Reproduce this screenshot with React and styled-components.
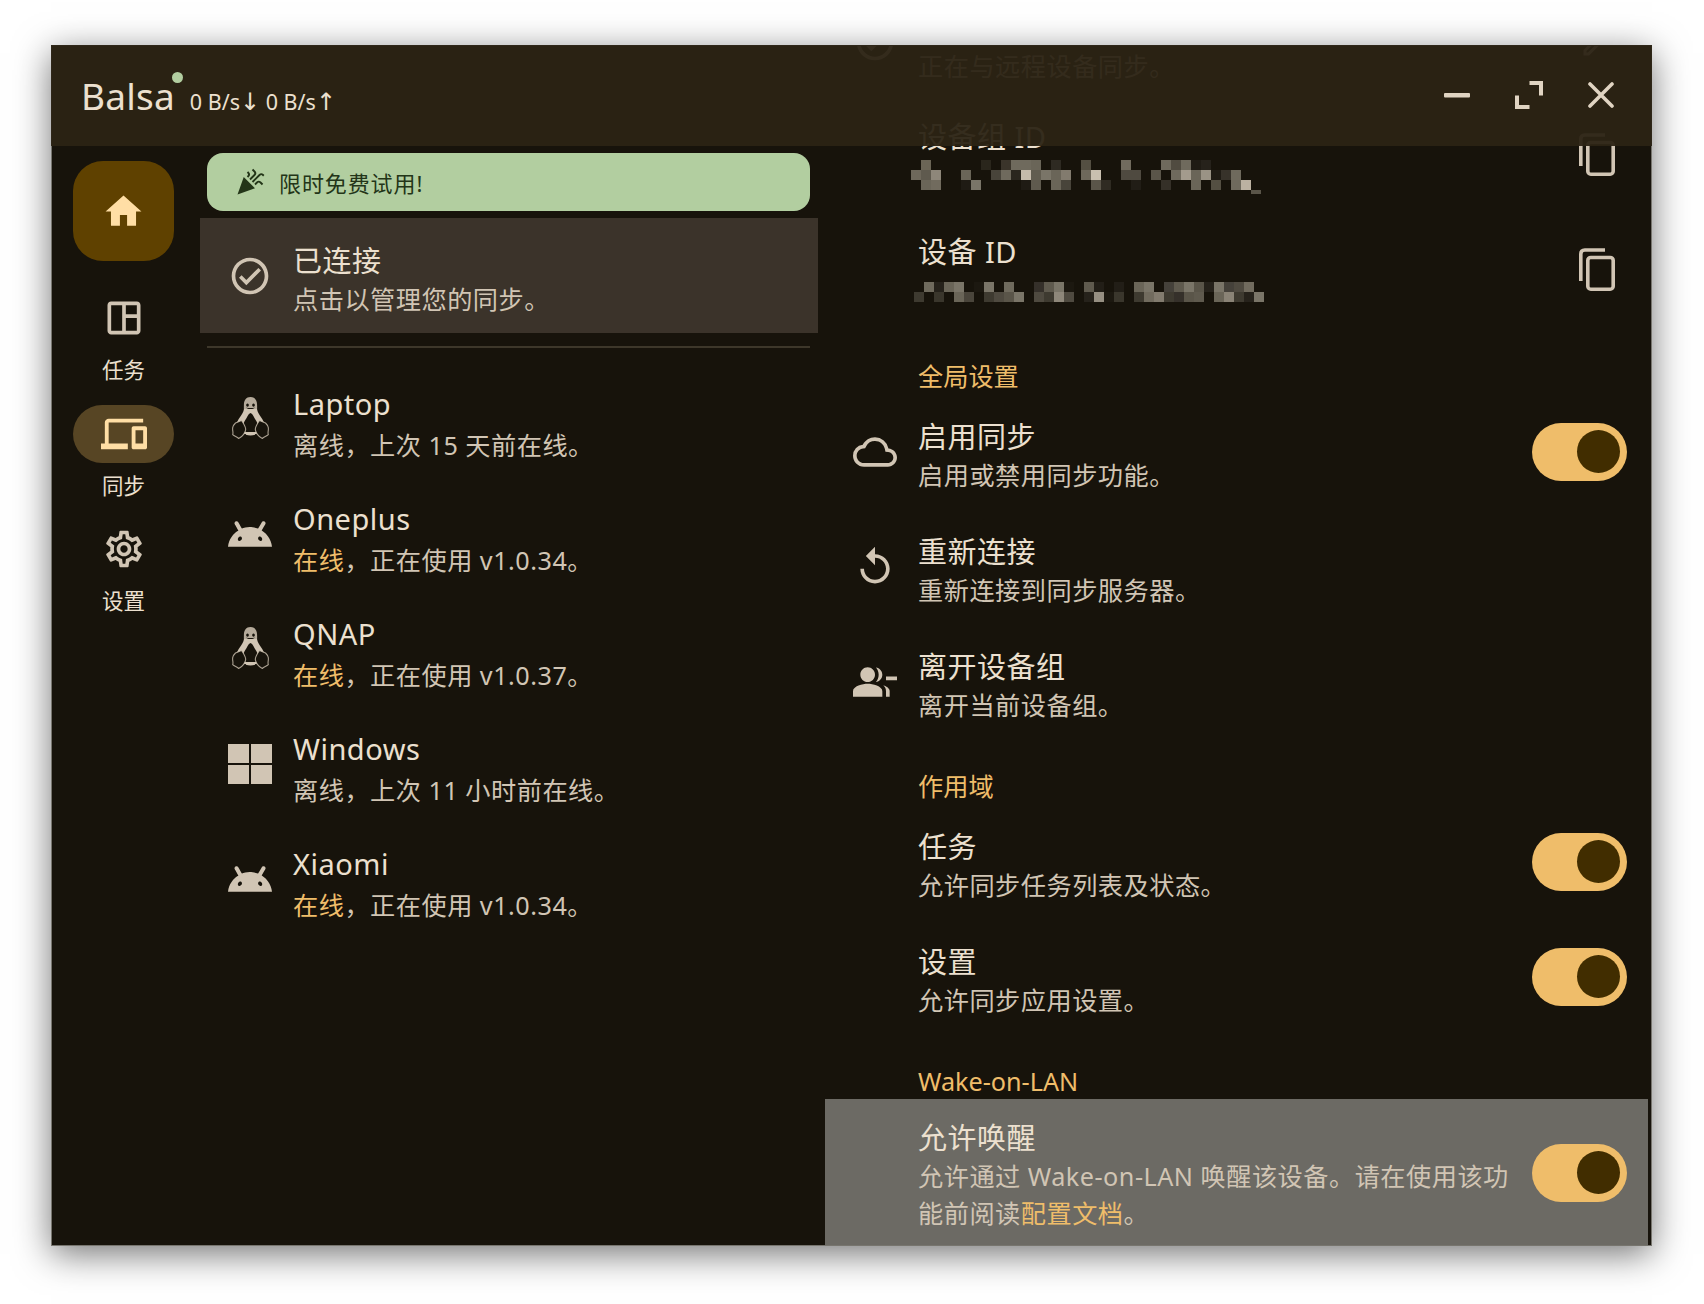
import React from "react";
import styled, { createGlobalStyle } from "styled-components";
import {
  MdHome,
  MdOutlineSpaceDashboard,
  MdOutlineDevices,
  MdOutlineSettings,
  MdOutlineCheckCircle,
  MdOutlineCloud,
  MdOutlineReplay,
  MdGroupRemove,
  MdCelebration,
  MdOutlineEdit,
} from "react-icons/md";
import { SiAndroid } from "react-icons/si";

const FONT = `"Noto Sans", "Noto Sans CJK SC", sans-serif`;
const SURFACE = "#17130b";

const GlobalStyle = createGlobalStyle`
  html, body {
    margin: 0;
    background: #fff;
    font-family: ${FONT};
  }
`;

const Page = styled.div`
  width: 1704px;
  height: 1304px;
  padding: 45px 0 0 51px;
  box-sizing: border-box;
  overflow: hidden;
`;

const Window = styled.div`
  position: relative;
  display: flex;
  width: 1601px;
  height: 1201px;
  overflow: hidden;
  background: ${SURFACE};
  outline: 1px solid #77756e;
  outline-offset: -1px;
  box-shadow: 0 8px 34px rgba(0, 0, 0, 0.55);
`;

/* the bar lies over the scrolled detail list, which shows faintly through it */
const TitleBar = styled.header`
  position: absolute;
  top: 0;
  left: 0;
  right: 0;
  z-index: 2;
  height: 101px;
  display: flex;
  align-items: center;
  justify-content: space-between;
  padding: 0 38px 0 30px;
  background: rgba(43, 35, 20, 0.95);
`;

const BrandGroup = styled.div`
  display: flex;
  align-items: baseline;
`;

const Brand = styled.span`
  position: relative;
  font-size: 37px;
  color: #ece0cf;
  letter-spacing: 0.2px;
`;

const StatusDot = styled.span`
  position: absolute;
  top: 2px;
  right: -8px;
  width: 11px;
  height: 11px;
  border-radius: 50%;
  background: #b2cea0;
`;

const Speed = styled.span`
  margin-left: 15px;
  font-size: 21.5px;
  line-height: 30px;
  color: #ece0cf;
`;

const SpeedArrow = styled.span`
  font-family: "DejaVu Sans", sans-serif;
  font-size: 24px;
  line-height: 1;
`;

const WindowControls = styled.div`
  display: flex;
  align-items: center;
  gap: 45px;
  color: #e0d4c2;
  padding-bottom: 1px;
`;

const Rail = styled.nav`
  flex: 0 0 149px;
  box-sizing: border-box;
  padding: 116px 0 0 22px;
  display: flex;
  flex-direction: column;
`;

const Fab = styled.div`
  width: 101px;
  height: 100px;
  margin-bottom: 28px;
  border-radius: 30px;
  background: #5f4100;
  color: #ffdea5;
  display: flex;
  align-items: center;
  justify-content: center;
`;

const RailItem = styled.div`
  width: 101px;
  height: 115.5px;
  display: flex;
  flex-direction: column;
  align-items: center;
`;

const RailPill = styled.div`
  width: 101px;
  height: 58px;
  border-radius: 29px;
  display: flex;
  align-items: center;
  justify-content: center;
  background: ${(p) => (p.$active ? "#574524" : "transparent")};
  color: ${(p) => (p.$active ? "#ffdea5" : "#d1c5b4")};
`;

const RailLabel = styled.span`
  margin-top: 7px;
  font-size: 21.5px;
  line-height: 32px;
  color: #ece0cf;
`;

const DevicePane = styled.section`
  flex: 0 0 618px;
  padding-top: 108px;
`;

const PromoBanner = styled.div`
  height: 58px;
  margin: 0 8px 7px 7px;
  padding-left: 28px;
  display: flex;
  align-items: center;
  gap: 14px;
  border-radius: 16px;
  background: #b2cea0;
  color: #233518;
  font-size: 22px;
  letter-spacing: 0.9px;
`;

const Divider = styled.div`
  height: 2px;
  margin: 13px 8px 13px 7px;
  background: #3d372a;
`;

const ListRow = styled.div`
  display: flex;
  align-items: center;
  box-sizing: border-box;
  height: ${(p) => p.$height || 115}px;
  padding: 0 21px 0 28px;
  background: ${(p) =>
    p.$selected ? "#3b332a" : p.$hovered ? "#6c6a64" : "transparent"};
`;

const RowIcon = styled.div`
  flex: 0 0 44px;
  min-width: 0;
  margin-right: 21px;
  display: flex;
  align-items: center;
  justify-content: center;
  color: #d1c5b4;
`;

const RowText = styled.div`
  flex: 1;
  min-width: 0;
  padding-top: ${(p) => p.$top}px;
`;

const RowTitle = styled.div`
  font-size: 29px;
  line-height: 40px;
  letter-spacing: 0.5px;
  color: #ece0cf;
`;

const RowSub = styled.div`
  margin-top: ${(p) => (p.$latin ? 3 : 0)}px;
  font-size: 25.2px;
  line-height: 37px;
  letter-spacing: 0.5px;
  color: #d1c5b4;
`;

const Accent = styled.span`
  color: #efbd6a;
`;

const DetailPane = styled.section`
  flex: 1;
  margin: -55px 4px 0 7px;
`;

const SectionLabel = styled.div`
  height: ${(p) => p.$height || 65}px;
  box-sizing: border-box;
  padding: 0 0 1px 93px;
  display: flex;
  align-items: flex-end;
  font-size: 25.2px;
  line-height: 34px;
  color: #efbd6a;
`;

const Toggle = styled.div`
  flex: 0 0 95px;
  height: 58px;
  box-sizing: border-box;
  margin-left: 20px;
  padding-right: 7px;
  display: flex;
  align-items: center;
  justify-content: flex-end;
  border-radius: 29px;
  background: #efbd6a;
`;

const Knob = styled.div`
  width: 43px;
  height: 43px;
  border-radius: 50%;
  background: #412d00;
`;

const Mosaic = styled.svg`
  display: block;
  margin-left: -7px;
`;

const TrailingIcon = styled.div`
  color: #d1c5b4;
  display: flex;
  margin: ${(p) => p.$drop || 0}px 12px 0 0;
`;

const MinimizeIcon = () => (
  <svg width="26" height="6" viewBox="0 0 26 6">
    <rect y="1" width="26" height="4.4" rx="1" fill="currentColor" />
  </svg>
);

const ExpandIcon = () => (
  <svg width="28" height="28" viewBox="0 0 28 28" fill="none" stroke="currentColor" strokeWidth="4">
    <path d="M14.500 2h11.500v12.500" />
    <path d="M2 14.500v11.500h12.500" />
  </svg>
);

const CloseIcon = () => (
  <svg width="26" height="26" viewBox="0 0 26 26" stroke="currentColor" strokeWidth="3.6" strokeLinecap="round">
    <path d="M2 2l22 22M24 2L2 24" />
  </svg>
);

const CopyIcon = () => (
  <svg width="36" height="43" viewBox="0 0 36 43" fill="none" stroke="currentColor" strokeWidth="3.6">
    <path d="M1.800 33V6q0-4 4-4H26" />
    <rect x="8.800" y="9.500" width="25.400" height="31.700" rx="3" />
  </svg>
);

const TuxIcon = () => (
  <svg width="37" height="43" viewBox="0 0 37 43">
    <path
      fill="currentColor"
      fillRule="evenodd"
      d="M12 12C11 18 5 22 3.500 30L11 37H26L33.500 30C32 22 26 18 25 12ZM18.500 16C16 17 15.500 20 13 23.500C11 27 10 30 12 35H25C27 30 26 27 24 23.500C21.500 20 21 17 18.500 16Z"
    />
    <g fill={SURFACE} stroke="currentColor" strokeOpacity="0.8" strokeWidth="1.100" strokeLinejoin="round">
      <path d="M3.500 26l6-2.500c2 2.800 3.800 5.400 4.200 8.500.2 3.200-3.400 8-7 9.500-1.800-1.600-4.200-2.200-6-3.800.8-2.600-.4-3.800 0-7 .3-1.900 1.300-3.300 2.800-4.700z" />
      <path d="M33.500 26l-6-2.500c-2 2.800-3.800 5.400-4.200 8.500-.2 3.200 3.400 8 7 9.500 1.800-1.600 4.200-2.200 6-3.800-.8-2.600.4-3.800 0-7-.3-1.900-1.300-3.300-2.800-4.700z" />
    </g>
    <path d="M14 37c3 .8 6 .8 9 0" fill="none" stroke="currentColor" strokeWidth="1.600" />
    <path
      fill="currentColor"
      fillOpacity="0.85"
      fillRule="evenodd"
      d="M18.500 0c4.400 0 6.600 3.400 6.600 8 0 3.400.4 5.400-1.400 6.600-1.400 1-3 1.400-5.200 1.400s-3.800-.4-5.200-1.400c-1.800-1.200-1.400-3.200-1.400-6.600 0-4.600 2.200-8 6.600-8zM15.500 6.500a1.300 1.600 0 1 0 .01 0zM21.500 6.500a1.300 1.600 0 1 0 .01 0zM14 10.500c2 2.400 7 2.400 9 0-2 .8-7 .8-9 0z"
    />
  </svg>
);

const WindowsIcon = () => (
  <svg width="44" height="40" viewBox="0 0 44 40" fill="currentColor">
    <rect width="21" height="19" />
    <rect x="23" width="21" height="19" />
    <rect y="21" width="21" height="19" />
    <rect x="23" y="21" width="21" height="19" />
  </svg>
);

const GROUP_ID_CELLS = [
  [1, 0, "#6b6556"], [7, 0, "#2a261c"], [9, 0, "#3a342a"], [10, 0, "#6f6a5d"], [11, 0, "#6f6a5d"], [12, 0, "#6a6558"],
  [14, 0, "#2e2a22"], [17, 0, "#544f42"], [21, 0, "#716b5e"], [25, 0, "#6f6a5d"], [26, 0, "#504b40"], [27, 0, "#6f6a5d"],
  [28, 0, "#1f1b14"], [29, 0, "#26221b"],
  [0, 1, "#6e685b"], [1, 1, "#5f5a4e"], [2, 1, "#8e877a"], [5, 1, "#6a6558"], [8, 1, "#48443a"], [9, 1, "#6f6a5d"],
  [10, 1, "#2a261e"], [11, 1, "#c5bbab"], [12, 1, "#625d50"], [13, 1, "#7a7568"], [14, 1, "#6a6558"], [15, 1, "#827b6e"],
  [17, 1, "#6e685b"], [18, 1, "#c9c0b0"], [21, 1, "#4f4a40"], [22, 1, "#4f4a40"], [24, 1, "#5a5549"], [26, 1, "#6f6a5d"],
  [27, 1, "#a39b8d"], [28, 1, "#6a6558"], [29, 1, "#9a9385"], [30, 1, "#1f1b14"], [31, 1, "#37322a"], [32, 1, "#6f6a5d"],
  [1, 2, "#6a6558"], [2, 2, "#716b5e"], [5, 2, "#1f1b14"], [6, 2, "#7a7568"], [11, 2, "#1f1b14"], [12, 2, "#5f5a4e"],
  [14, 2, "#6a6558"], [15, 2, "#48443a"], [18, 2, "#5a5549"], [19, 2, "#2f2b22"], [22, 2, "#211d16"], [25, 2, "#353028"],
  [28, 2, "#6a6558"], [30, 2, "#544f42"], [32, 2, "#6f6a5d"], [33, 2, "#bcb2a2"], [34, 3, "#5a5549"],
];

const DEVICE_ID_CELLS = [
  [1, 0, "#6f6a5d"], [2, 0, "#26221b"], [3, 0, "#6a6558"], [4, 0, "#7a7568"], [6, 0, "#1c1810"], [7, 0, "#7a7568"],
  [9, 0, "#6f6a5d"], [12, 0, "#35302a"], [13, 0, "#5f5a4e"], [14, 0, "#7a7568"], [15, 0, "#1c1810"], [17, 0, "#5f5a4e"],
  [18, 0, "#221e17"], [20, 0, "#221e17"], [22, 0, "#6a6558"], [23, 0, "#7a7568"], [25, 0, "#45413a"], [26, 0, "#5f5a4e"],
  [27, 0, "#7a7568"], [28, 0, "#5a5549"], [29, 0, "#26221b"], [30, 0, "#7a7568"], [31, 0, "#45413a"], [32, 0, "#4f4a40"],
  [33, 0, "#716b5e"],
  [0, 1, "#3e3a30"], [2, 1, "#3a362c"], [4, 1, "#6a6558"], [5, 1, "#4a453b"], [7, 1, "#3e3a30"], [8, 1, "#4f4a40"],
  [9, 1, "#5a5549"], [10, 1, "#7a7568"], [12, 1, "#4f4a40"], [13, 1, "#3e3a30"], [14, 1, "#8e877a"], [15, 1, "#4f4a40"],
  [17, 1, "#26221b"], [18, 1, "#968f82"], [19, 1, "#1c1810"], [20, 1, "#3a362c"], [22, 1, "#3e3a30"], [23, 1, "#716b5e"],
  [24, 1, "#827b6e"], [25, 1, "#3e3a30"], [26, 1, "#35302a"], [27, 1, "#5a5549"], [28, 1, "#5f5a4e"], [30, 1, "#6a6558"],
  [31, 1, "#8a8376"], [32, 1, "#3e3a30"], [33, 1, "#26221b"], [34, 1, "#7a7568"],
];

// the two ids are blurred out in the picture, so they are drawn as pixel blocks
const PixelatedId = ({ cells, offsetX, offsetY }) => (
  <Mosaic width="360" height="37" viewBox="0 0 360 37">
    {cells.map(([col, row, fill]) => (
      <rect
        key={`${col}-${row}`}
        x={offsetX + col * 10}
        y={offsetY + row * 10}
        width="10"
        height={row === 3 ? 4 : 10}
        fill={fill}
      />
    ))}
  </Mosaic>
);

const DEVICES = [
  { name: "Laptop", os: "linux", status: "离线，上次 15 天前在线。" },
  { name: "Oneplus", os: "android", online: true, status: "，正在使用 v1.0.34。" },
  { name: "QNAP", os: "linux", online: true, status: "，正在使用 v1.0.37。" },
  { name: "Windows", os: "windows", status: "离线，上次 11 小时前在线。" },
  { name: "Xiaomi", os: "android", online: true, status: "，正在使用 v1.0.34。" },
];

const OS_ICONS = {
  linux: <TuxIcon />,
  android: <SiAndroid size={44} />,
  windows: <WindowsIcon />,
};

const Row = ({ icon, title, sub, trailing, latin, textTop = 8, ...rest }) => (
  <ListRow {...rest}>
    <RowIcon>{icon}</RowIcon>
    <RowText $top={textTop}>
      <RowTitle>{title}</RowTitle>
      <RowSub $latin={latin}>{sub}</RowSub>
    </RowText>
    {trailing}
  </ListRow>
);

const Switch = () => (
  <Toggle>
    <Knob />
  </Toggle>
);

const RAIL_ITEMS = [
  { label: "任务", icon: <MdOutlineSpaceDashboard size={44} /> },
  { label: "同步", icon: <MdOutlineDevices size={46} />, active: true },
  { label: "设置", icon: <MdOutlineSettings size={44} /> },
];

const Copy = () => (
  <TrailingIcon $drop={5}>
    <CopyIcon />
  </TrailingIcon>
);

const App = () => (
  <Page>
    <GlobalStyle />
    <Window>
      <TitleBar>
        <BrandGroup>
          <Brand>
            Balsa
            <StatusDot />
          </Brand>
          <Speed>
            0 B/s<SpeedArrow>↓</SpeedArrow> 0 B/s<SpeedArrow>↑</SpeedArrow>
          </Speed>
        </BrandGroup>
        <WindowControls>
          <MinimizeIcon />
          <ExpandIcon />
          <CloseIcon />
        </WindowControls>
      </TitleBar>

      <Rail>
        <Fab>
          <MdHome size={43} />
        </Fab>
        {RAIL_ITEMS.map((item) => (
          <RailItem key={item.label}>
            <RailPill $active={item.active}>{item.icon}</RailPill>
            <RailLabel>{item.label}</RailLabel>
          </RailItem>
        ))}
      </Rail>

      <DevicePane>
        <PromoBanner>
          <MdCelebration size={30} />
          限时免费试用!
        </PromoBanner>
        <Row
          $selected
          icon={<MdOutlineCheckCircle size={44} />}
          title="已连接"
          sub="点击以管理您的同步。"
        />
        <Divider />
        {DEVICES.map((device) => (
          <Row
            key={device.name}
            latin
            textTop={10}
            icon={OS_ICONS[device.os]}
            title={device.name}
            sub={
              <>
                {device.online && <Accent>在线</Accent>}
                {device.status}
              </>
            }
          />
        ))}
      </DevicePane>

      <DetailPane>
        <Row
          $height={104}
          icon={<MdOutlineCheckCircle size={44} />}
          title={"\u00a0"}
          sub="正在与远程设备同步。"
          trailing={
            <TrailingIcon>
              <MdOutlineEdit size={36} />
            </TrailingIcon>
          }
        />
        <Row
          title="设备组 ID"
          sub={<PixelatedId cells={GROUP_ID_CELLS} offsetX={0} offsetY={3} />}
          trailing={<Copy />}
        />
        <Row
          title="设备 ID"
          sub={<PixelatedId cells={DEVICE_ID_CELLS} offsetX={3} offsetY={10} />}
          trailing={<Copy />}
        />
        <SectionLabel $height={70}>全局设置</SectionLabel>
        <Row
          icon={<MdOutlineCloud size={44} />}
          title="启用同步"
          sub="启用或禁用同步功能。"
          trailing={<Switch />}
        />
        <Row icon={<MdOutlineReplay size={44} />} title="重新连接" sub="重新连接到同步服务器。" />
        <Row icon={<MdGroupRemove size={44} />} title="离开设备组" sub="离开当前设备组。" />
        <SectionLabel>作用域</SectionLabel>
        <Row title="任务" sub="允许同步任务列表及状态。" trailing={<Switch />} />
        <Row title="设置" sub="允许同步应用设置。" trailing={<Switch />} />
        <SectionLabel>Wake-on-LAN</SectionLabel>
        <Row
          $hovered
          $height={147}
          textTop={4}
          title="允许唤醒"
          sub={
            <>
              允许通过 Wake-on-LAN 唤醒该设备。请在使用该功能前阅读<Accent>配置文档</Accent>。
            </>
          }
          trailing={<Switch />}
        />
      </DetailPane>
    </Window>
  </Page>
);

export default App;
